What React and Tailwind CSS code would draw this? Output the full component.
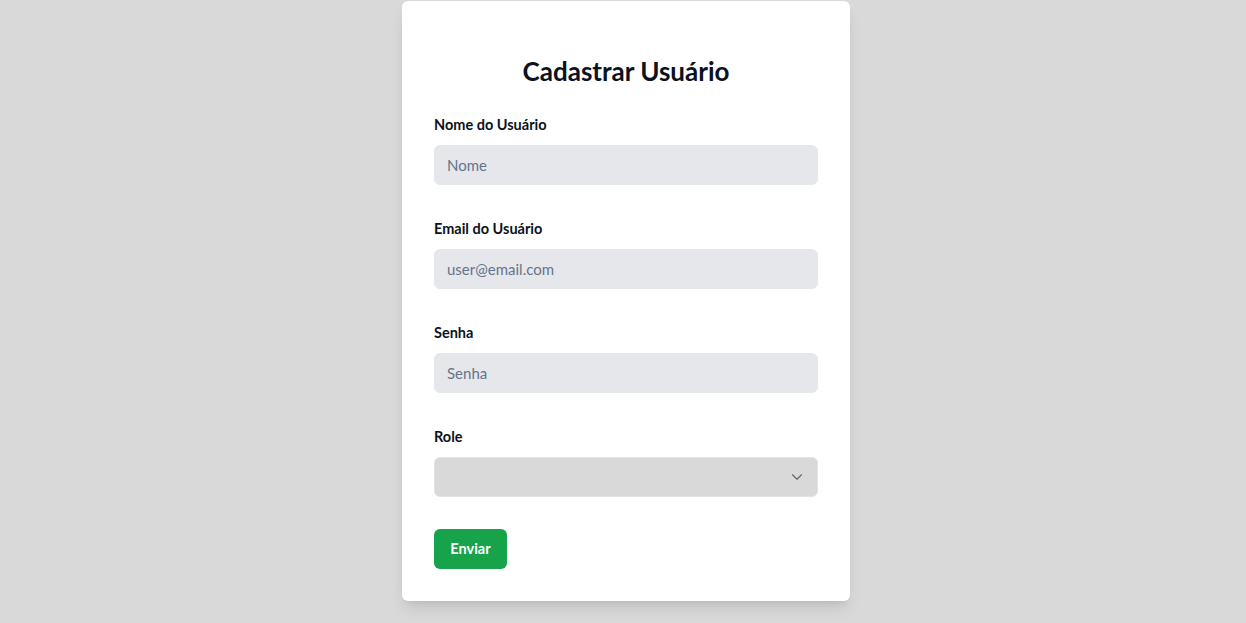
import { ChevronDown } from "lucide-react";

// Formulário de cadastro de usuário
function Field({ label, children, last }) {
  return (
    <div className={last ? "" : "mb-[34px]"}>
      <label className="mb-2.5 block text-[14.5px] font-bold leading-5 text-[#0b1220]">
        {label}
      </label>
      {children}
    </div>
  );
}

const inputClass =
  "block h-10 w-full rounded-md border border-[#e5e7eb] bg-[#e5e7eb] px-3 text-[15px] text-[#111827] outline-none placeholder:text-[#64748b]";

export default function App() {
  return (
    <div
      className="flex min-h-screen justify-center bg-[#d9d9d9] pl-[6px]"
      style={{ fontFamily: 'Lato, "Noto Sans", sans-serif' }}
    >
      <div className="mt-px h-fit w-[448px] rounded-md bg-white px-8 pb-8 pt-[54px] shadow-lg">
        <h2 className="text-center text-[26px] font-bold leading-8 text-[#0b1220]">
          Cadastrar Usuário
        </h2>

        <form className="mt-7" onSubmit={(e) => e.preventDefault()}>
          <Field label="Nome do Usuário">
            <input type="text" placeholder="Nome" className={inputClass} />
          </Field>
          <Field label="Email do Usuário">
            <input type="email" placeholder="user@email.com" className={inputClass} />
          </Field>
          <Field label="Senha">
            <input type="password" placeholder="Senha" className={inputClass} />
          </Field>
          <Field label="Role" last>
            <div className="relative">
              <select className="block h-10 w-full appearance-none rounded-md border border-[#e3e3e3] bg-[#d9d9d9] px-3 text-[15px] outline-none">
                <option value=""></option>
              </select>
              <ChevronDown
                size={18}
                strokeWidth={1.5}
                className="pointer-events-none absolute right-[12px] top-[11px] text-[#666666]"
              />
            </div>
          </Field>

          <button
            type="submit"
            className="mt-8 h-10 w-[73px] rounded-md bg-[#16a34a] text-[14.5px] font-bold text-white"
          >
            Enviar
          </button>
        </form>
      </div>
    </div>
  );
}
